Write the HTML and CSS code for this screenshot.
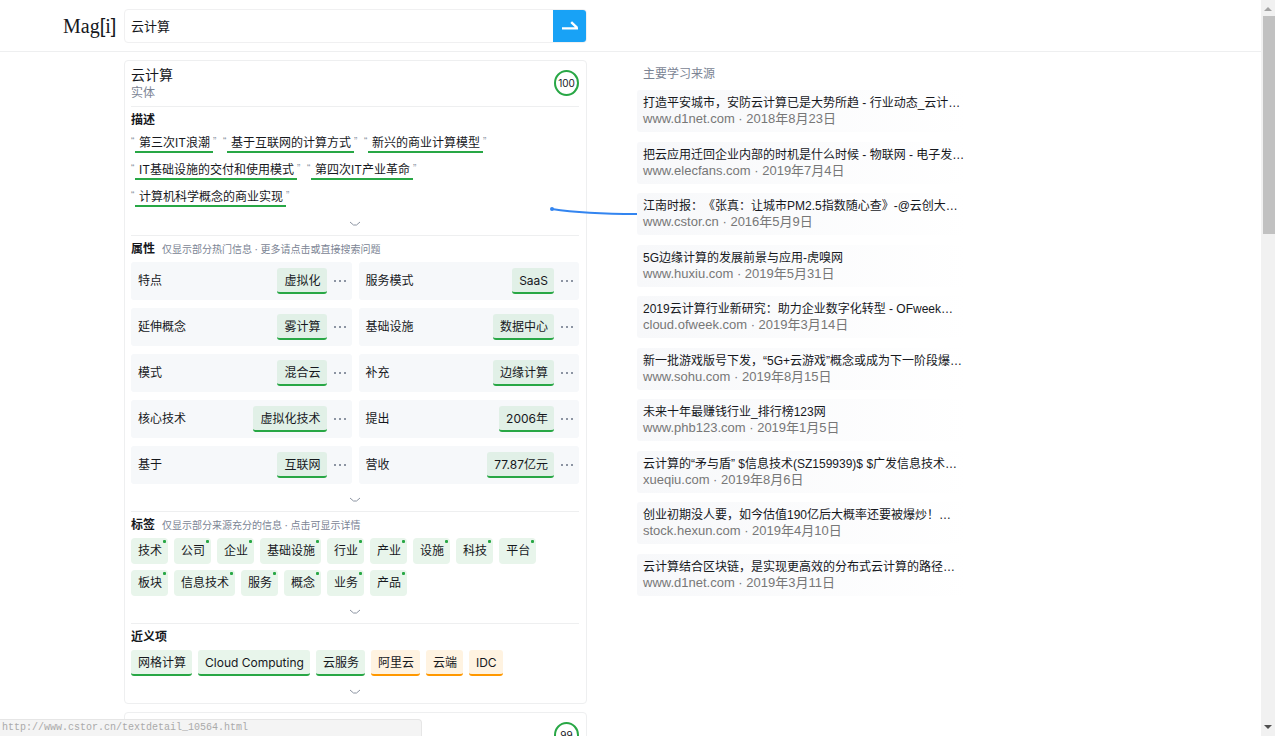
FILE: index.html
```html
<!DOCTYPE html>
<html lang="zh-CN">
<head>
<meta charset="utf-8">
<title>云计算 - Magi</title>
<link rel="stylesheet" href="styles.css">
</head>
<body>
<header class="topbar">
  <a class="logo" href="#">Mag<span class="logo-bracket">[</span>i<span class="logo-bracket">]</span></a>
  <form class="search">
    <input class="search-input" type="text" value="云计算" aria-label="搜索">
    <button class="search-button" type="button" aria-label="搜索">
      <svg width="16" height="10" viewBox="0 0 16 10"><path d="M0 7.4H16M9.2 1.2L15 6.6" fill="none" stroke="#fff" stroke-width="2.4"/></svg>
    </button>
  </form>
</header>
<main class="page">
  <div class="results">
    <article class="card">
      <header class="card-head">
        <div>
          <h1 class="card-title">云计算</h1>
          <p class="card-kind">实体</p>
        </div>
        <span class="score">100</span>
      </header>
      <section class="section">
        <h2 class="section-head">描述</h2>
        <ul class="quotes">
          <li class="quote"><a href="#">第三次IT浪潮</a></li>
          <li class="quote"><a href="#">基于互联网的计算方式</a></li>
          <li class="quote"><a href="#">新兴的商业计算模型</a></li>
          <li class="quote"><a href="#">IT基础设施的交付和使用模式</a></li>
          <li class="quote"><a href="#">第四次IT产业革命</a></li>
          <li class="quote"><a href="#">计算机科学概念的商业实现</a></li>
        </ul>
        <button class="more" type="button" aria-label="展开描述"><svg width="12" height="6" viewBox="0 0 12 6"><path d="M1 1L4.500 4H7.500L11 1"/></svg></button>
      </section>
      <section class="section">
        <h2 class="section-head">属性<small>仅显示部分热门信息 · 更多请点击或直接搜索问题</small></h2>
        <dl class="facts">
          <div class="fact"><dt>特点</dt><dd><a class="chip" href="#">虚拟化</a><button class="dots" type="button" aria-label="更多"></button></dd></div>
          <div class="fact"><dt>服务模式</dt><dd><a class="chip" href="#">SaaS</a><button class="dots" type="button" aria-label="更多"></button></dd></div>
          <div class="fact"><dt>延伸概念</dt><dd><a class="chip" href="#">雾计算</a><button class="dots" type="button" aria-label="更多"></button></dd></div>
          <div class="fact"><dt>基础设施</dt><dd><a class="chip" href="#">数据中心</a><button class="dots" type="button" aria-label="更多"></button></dd></div>
          <div class="fact"><dt>模式</dt><dd><a class="chip" href="#">混合云</a><button class="dots" type="button" aria-label="更多"></button></dd></div>
          <div class="fact"><dt>补充</dt><dd><a class="chip" href="#">边缘计算</a><button class="dots" type="button" aria-label="更多"></button></dd></div>
          <div class="fact"><dt>核心技术</dt><dd><a class="chip" href="#">虚拟化技术</a><button class="dots" type="button" aria-label="更多"></button></dd></div>
          <div class="fact"><dt>提出</dt><dd><a class="chip" href="#">2006年</a><button class="dots" type="button" aria-label="更多"></button></dd></div>
          <div class="fact"><dt>基于</dt><dd><a class="chip" href="#">互联网</a><button class="dots" type="button" aria-label="更多"></button></dd></div>
          <div class="fact"><dt>营收</dt><dd><a class="chip" href="#">77.87亿元</a><button class="dots" type="button" aria-label="更多"></button></dd></div>
        </dl>
        <button class="more" type="button" aria-label="展开属性"><svg width="12" height="6" viewBox="0 0 12 6"><path d="M1 1L4.500 4H7.500L11 1"/></svg></button>
      </section>
      <section class="section">
        <h2 class="section-head">标签<small>仅显示部分来源充分的信息 · 点击可显示详情</small></h2>
        <div class="tags">
          <button class="tag" type="button">技术</button>
          <button class="tag" type="button">公司</button>
          <button class="tag" type="button">企业</button>
          <button class="tag" type="button">基础设施</button>
          <button class="tag" type="button">行业</button>
          <button class="tag" type="button">产业</button>
          <button class="tag" type="button">设施</button>
          <button class="tag" type="button">科技</button>
          <button class="tag" type="button">平台</button>
          <button class="tag" type="button">板块</button>
          <button class="tag" type="button">信息技术</button>
          <button class="tag" type="button">服务</button>
          <button class="tag" type="button">概念</button>
          <button class="tag" type="button">业务</button>
          <button class="tag" type="button">产品</button>
        </div>
        <button class="more" type="button" aria-label="展开标签"><svg width="12" height="6" viewBox="0 0 12 6"><path d="M1 1L4.500 4H7.500L11 1"/></svg></button>
      </section>
      <section class="section">
        <h2 class="section-head">近义项</h2>
        <div class="synonyms">
          <a class="chip" href="#">网格计算</a>
          <a class="chip" href="#">Cloud Computing</a>
          <a class="chip" href="#">云服务</a>
          <a class="chip chip-weak" href="#">阿里云</a>
          <a class="chip chip-weak" href="#">云端</a>
          <a class="chip chip-weak" href="#">IDC</a>
        </div>
        <button class="more" type="button" aria-label="展开近义项"><svg width="12" height="6" viewBox="0 0 12 6"><path d="M1 1L4.500 4H7.500L11 1"/></svg></button>
      </section>
    </article>
    <article class="card">
      <header class="card-head card-head-end"><span class="score">99</span></header>
    </article>
  </div>
  <aside class="sources">
    <h2 class="sources-head">主要学习来源</h2>
    <div class="source-list">
      <a class="source" href="#"><span class="source-title">打造平安城市，安防云计算已是大势所趋 - 行业动态_云计…</span><span class="source-meta">www.d1net.com · 2018年8月23日</span></a>
      <a class="source" href="#"><span class="source-title">把云应用迁回企业内部的时机是什么时候 - 物联网 - 电子发…</span><span class="source-meta">www.elecfans.com · 2019年7月4日</span></a>
      <a class="source" href="#"><span class="source-title">江南时报：《张真：让城市PM2.5指数随心查》-@云创大…</span><span class="source-meta">www.cstor.cn · 2016年5月9日</span></a>
      <a class="source" href="#"><span class="source-title">5G边缘计算的发展前景与应用-虎嗅网</span><span class="source-meta">www.huxiu.com · 2019年5月31日</span></a>
      <a class="source" href="#"><span class="source-title">2019云计算行业新研究：助力企业数字化转型 - OFweek…</span><span class="source-meta">cloud.ofweek.com · 2019年3月14日</span></a>
      <a class="source" href="#"><span class="source-title">新一批游戏版号下发，“5G+云游戏”概念或成为下一阶段爆…</span><span class="source-meta">www.sohu.com · 2019年8月15日</span></a>
      <a class="source" href="#"><span class="source-title">未来十年最赚钱行业_排行榜123网</span><span class="source-meta">www.phb123.com · 2019年1月5日</span></a>
      <a class="source" href="#"><span class="source-title">云计算的“矛与盾” $信息技术(SZ159939)$ $广发信息技术…</span><span class="source-meta">xueqiu.com · 2019年8月6日</span></a>
      <a class="source" href="#"><span class="source-title">创业初期没人要，如今估值190亿后大概率还要被爆炒！…</span><span class="source-meta">stock.hexun.com · 2019年4月10日</span></a>
      <a class="source" href="#"><span class="source-title">云计算结合区块链，是实现更高效的分布式云计算的路径…</span><span class="source-meta">www.d1net.com · 2019年3月11日</span></a>
    </div>
  </aside>
</main>
<svg class="connector" width="87" height="12" viewBox="0 0 87 12"><path d="M2 4C28 8 56 9 87 9" fill="none" stroke="#3385f0" stroke-width="2"/><circle cx="2" cy="4" r="2" fill="#3385f0"/></svg>
<div class="scrollbar">
  <svg width="8" height="4" viewBox="0 0 8 4"><path d="M4 0L8 4H0Z" fill="#a3a3a3"/></svg>
  <div class="scroll-track"><div class="scroll-thumb"></div></div>
  <svg width="8" height="4" viewBox="0 0 8 4"><path d="M0 0H8L4 4Z" fill="#505050"/></svg>
</div>
<div class="status">http://www.cstor.cn/textdetail_10564.html</div>
</body>
</html>
```
FILE: styles.css
```css
* { box-sizing: border-box; }

body {
  margin: 0;
  height: 100vh;
  overflow: hidden;
  background: #fff;
  color: #16181d;
  font: 12px/16px Inter, "Noto Sans CJK SC", sans-serif;
}

h1, h2, p, ul, dl, dd { margin: 0; padding: 0; font-size: inherit; }
ul { list-style: none; }
a { color: inherit; text-decoration: none; }
button, input { font: inherit; color: inherit; border: 0; padding: 0; background: none; }
svg { display: block; }

.topbar {
  display: flex;
  align-items: center;
  height: 52px;
  padding-left: 63px;
  border-bottom: 1px solid #eeeff0;
}
.logo {
  width: 61px;
  font: 20px/24px "Liberation Serif", serif;
}
.logo-bracket { font-family: "Liberation Sans", sans-serif; font-size: 20px; }
.search { display: flex; width: 463px; height: 34px; border: 1px solid #f0f0f1; border-radius: 4px; }
.search-input { flex: 1; min-width: 0; padding: 0 6px; font-size: 13px; outline: none; }
.search-button {
  display: flex;
  align-items: center;
  justify-content: center;
  width: 33px;
  background: #18a2f6;
  border-radius: 0 3px 3px 0;
}

.page { display: flex; gap: 50px; padding: 8px 14px 0 124px; }
.results { display: flex; flex-direction: column; gap: 8px; width: 463px; }
.card { padding: 4px 7px 0 6px; border: 1px solid #eeeff0; border-radius: 4px; }
.card-head { display: flex; justify-content: space-between; align-items: center; padding-bottom: 5px; }
.card-head-end { justify-content: flex-end; padding: 5px 0; }
.card-title { font-size: 14px; line-height: 20px; font-weight: 400; }
.card-kind { color: #7b8494; }
.score {
  width: 25px;
  height: 26px;
  border: 2px solid #28a745;
  border-radius: 50%;
  font-size: 10px;
  line-height: 22px;
  text-align: center;
}

.section { border-top: 1px solid #eeeff0; }
.section-head { display: flex; align-items: center; gap: 7px; height: 26px; font-weight: 700; }
.section-head small { font-size: 10px; font-weight: 400; color: #7b8494; }
.more { display: flex; justify-content: center; align-items: center; width: 100%; height: 27px; padding-top: 4px; }
.more path { fill: none; stroke: #8c94a2; stroke-width: 1; }

.quotes { display: flex; flex-wrap: wrap; gap: 7px 6px; padding: 0 12px 1px 0; }
.quote { display: flex; height: 20px; color: #8c94a2; }
.quote::before, .quote::after { width: 4px; font: 10px/18px "Liberation Sans", sans-serif; }
.quote::before { content: "“"; }
.quote::after { content: "”"; }
.quote a { padding: 0 3px 0 4px; color: #16181d; line-height: 20px; border-bottom: 2px solid #28a745; }

.facts { display: grid; grid-template-columns: 1fr 1fr; gap: 8px 7px; }
.fact {
  display: flex;
  align-items: center;
  justify-content: space-between;
  height: 38px;
  padding: 0 6px 0 7px;
  background: #f6f8fa;
  border-radius: 3px;
}
.fact dd { display: flex; align-items: center; gap: 7px; }
.fact .chip { background: #e1f0e7; }
.dots {
  width: 12px;
  height: 2px;
  background: repeating-linear-gradient(90deg, #8c94a2 0 2px, transparent 2px 5px);
}

.chip {
  height: 26px;
  padding: 0 6px 0 7px;
  line-height: 25px;
  background: #e8f5eb;
  border-bottom: 2px solid #28a745;
  border-radius: 3px;
}
.chip-weak { background: #fff3e1; border-color: #ff9800; }
.synonyms { display: flex; gap: 6px; }

.tags { display: flex; flex-wrap: wrap; gap: 6px; padding-right: 12px; }
.tag { position: relative; height: 26px; padding: 0 6px 0 7px; background: #e8f5eb; border-radius: 4px; }
.tag::after {
  content: "";
  position: absolute;
  top: 2px;
  right: 2px;
  width: 3px;
  height: 3px;
  border-radius: 1px;
  background: #28a745;
}

.sources {
  width: 330px;
  padding-top: 4px;
  font-family: "Liberation Sans", "Noto Sans CJK SC", sans-serif;
  text-spacing-trim: space-all;
}
.sources-head { padding: 0 6px 6px; line-height: 20px; font-weight: 400; color: #7b8494; }
.source-list { display: flex; flex-direction: column; justify-content: space-between; min-height: 506px; }
.source {
  display: flex;
  flex-direction: column;
  padding: 5px 0 5px 6px;
  background: linear-gradient(90deg, #f7f8fa, #fff);
  border-radius: 3px;
  white-space: nowrap;
}
.source-meta { font-size: 13px; color: #777; }

.connector { position: absolute; left: 550px; top: 205px; }

.scrollbar {
  position: fixed;
  inset: 0 0 0 auto;
  display: flex;
  flex-direction: column;
  align-items: center;
  gap: 5px;
  width: 14px;
  padding: 7px 0;
  background: #f1f1f1;
}
.scroll-track { flex: 1; align-self: stretch; padding-left: 2px; }
.scroll-thumb { height: 31%; background: #c1c1c1; }

.status {
  position: fixed;
  left: 0;
  bottom: 0;
  width: 422px;
  padding-left: 2px;
  border: solid #e6e6e6;
  border-width: 1px 1px 0 0;
  border-radius: 0 4px 0 0;
  background: #f4f4f4;
  color: #aaa;
  font: 10px/16px "Liberation Mono", monospace;
}
```
